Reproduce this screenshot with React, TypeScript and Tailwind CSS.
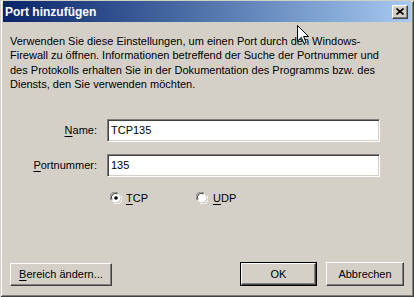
import React from "react";

const raised =
  "border-t border-l border-t-white border-l-white border-b border-r border-b-[#404040] border-r-[#404040] shadow-[inset_-1px_-1px_#808080,inset_1px_1px_#d4d0c8]";

function Radio({ checked }: { checked: boolean }) {
  return (
    <svg width="12" height="12" viewBox="0 0 12 12" className="shrink-0">
      <path d="M1 8 A5 5 0 0 1 8 1" fill="none" stroke="#808080" strokeWidth="1" />
      <path d="M11 4 A5 5 0 0 1 4 11" fill="none" stroke="#ffffff" strokeWidth="1" />
      <circle cx="6" cy="6" r="4.5" fill="#ffffff" />
      <path d="M2 7.5 A4 4 0 0 1 7.5 2" fill="none" stroke="#404040" strokeWidth="1" />
      <path d="M10 4.5 A4 4 0 0 1 4.5 10" fill="none" stroke="#d4d0c8" strokeWidth="1" />
      {checked && <circle cx="6" cy="6" r="1.8" fill="#000" />}
    </svg>
  );
}

function Field({ label, ul, rest, value, className }: { label: string; ul: string; rest: string; value: string; className?: string }) {
  return (
    <div className={"flex items-center " + (className ?? "")}>
      <div className="w-[94px] text-right">
        <span className="underline underline-offset-[2px]">{ul}</span>
        {rest}
      </div>
      <div className="ml-[10px] w-[273px] h-[23px] bg-white border-t border-l border-t-[#808080] border-l-[#808080] border-b border-r border-b-white border-r-white shadow-[inset_1px_1px_#404040,inset_-1px_-1px_#d4d0c8] flex items-center pl-[3px]">
        {label === "x" ? null : value}
      </div>
    </div>
  );
}

export default function App() {
  return (
    <div
      className="relative w-[414px] h-[297px] bg-[#d4d0c8] flex flex-col pt-[1px] px-[3px] pb-[3px] text-black text-[11px] leading-[14px] shadow-[inset_1px_1px_#d4d0c8,inset_-1px_-1px_#404040,inset_2px_2px_#ffffff,inset_-2px_-2px_#808080] overflow-hidden"
      style={{ fontFamily: '"Liberation Sans", Arial, sans-serif' }}
    >
      <div className="h-[21px] shrink-0 flex items-center justify-between pl-[2px] pr-[3px] bg-gradient-to-r from-[#0a246a] to-[#a6caf0]">
        <span className="text-white font-bold text-[12px] leading-[14px]">Port hinzufügen</span>
        <div className={"w-[16px] h-[14px] bg-[#d4d0c8] flex items-center justify-center " + raised}>
          <svg width="8" height="7" viewBox="0 0 8 7">
            <path d="M0.5 0.5 L7.5 6.5 M7.5 0.5 L0.5 6.5" stroke="#000" strokeWidth="1.6" />
          </svg>
        </div>
      </div>

      <p className="mt-[12px] ml-[7px] leading-[14.4px] whitespace-nowrap">
        Verwenden Sie diese Einstellungen, um einen Port durch den Windows-
        <br />
        Firewall zu öffnen. Informationen betreffend der Suche der Portnummer und
        <br />
        des Protokolls erhalten Sie in der Dokumentation des Programms bzw. des
        <br />
        Diensts, den Sie verwenden möchten.
      </p>

      <Field className="mt-[27px]" label="Name" ul="N" rest="ame:" value="TCP135" />
      <Field className="mt-[12px]" label="Portnummer" ul="P" rest="ortnummer:" value="135" />

      <div className="mt-[14px] ml-[107px] flex items-center h-[14px]">
        <Radio checked />
        <span className="ml-[4px]">
          <span className="underline underline-offset-[2px]">T</span>CP
        </span>
        <div className="ml-[48px] flex items-center">
          <Radio checked={false} />
          <span className="ml-[5px]">
            <span className="underline underline-offset-[2px]">U</span>DP
          </span>
        </div>
      </div>

      <div className="mt-auto mb-[8px] flex items-center px-[7px]">
        <div className={"w-[102px] h-[23px] flex items-center justify-center " + raised}>
          <span>
            <span className="underline underline-offset-[2px]">B</span>ereich ändern...
          </span>
        </div>
        <div className="ml-auto w-[77px] h-[24px] border border-black">
          <div className={"w-full h-full flex items-center justify-center " + raised}>OK</div>
        </div>
        <div className={"ml-[9px] w-[78px] h-[24px] flex items-center justify-center " + raised}>Abbrechen</div>
      </div>

      <svg className="absolute left-[297px] top-[25px]" width="13" height="20" viewBox="0 0 13 20">
        <path d="M0.5 0.5 L0.5 16 L4.3 12.3 L7 18.5 L9.2 17.5 L6.6 11.5 L11.5 11.5 Z" fill="#fff" stroke="#000" strokeWidth="1" />
      </svg>
    </div>
  );
}
